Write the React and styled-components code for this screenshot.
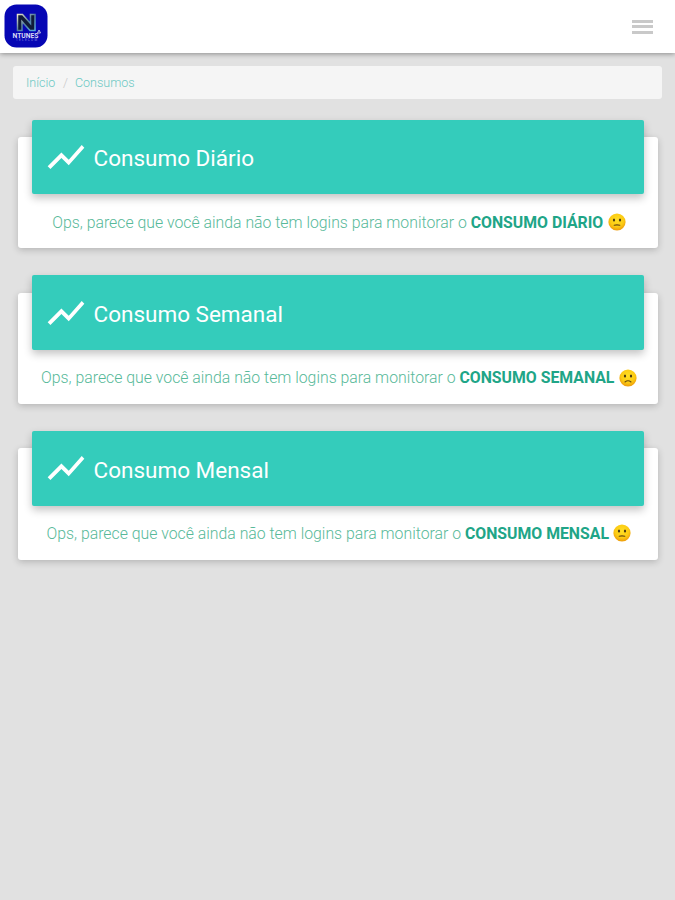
import React from "react";
import styled, { createGlobalStyle } from "styled-components";

const GlobalStyle = createGlobalStyle`
  * { box-sizing: border-box; }
  body {
    margin: 0;
    background: #e1e1e1;
    font-family: Roboto, "Liberation Sans", sans-serif;
  }
`;

const Page = styled.div`
  min-height: 100vh;
  background: #e1e1e1;
`;

const TopBar = styled.header`
  display: flex;
  align-items: center;
  justify-content: space-between;
  height: 53px;
  padding: 0 22px 0 4px;
  background: #fff;
  box-shadow: 0 1px 5px rgba(0, 0, 0, 0.38);
`;

const LogoSvg = styled.svg`
  display: block;
  width: 44px;
  height: 44px;
  margin-top: -1px;
`;

const MenuButton = styled.button`
  display: flex;
  flex-direction: column;
  gap: 2.5px;
  width: 21px;
  padding: 0;
  border: 0;
  background: none;
`;

const MenuBar = styled.span`
  height: 3px;
  background: #c9c9c9;
`;

const Breadcrumb = styled.nav`
  display: flex;
  align-items: center;
  height: 33px;
  margin: 13px 13px 0;
  padding: 0 13px;
  border-radius: 3px;
  background: #f5f5f5;
  font-size: 12.5px;
  font-weight: 300;
`;

const Crumb = styled.a`
  width: ${(p) => p.$width}px;
  color: #6cc8c3;
  white-space: nowrap;
`;

const Separator = styled.span`
  width: 20px;
  padding-left: 8px;
  color: #c8c8c8;
`;

const CardList = styled.main`
  display: flex;
  flex-direction: column;
  gap: 44.4px;
  padding: 38px 17px 0 18px;
`;

const Card = styled.section`
  height: 111.3px;
  padding: 0 14px;
  border-radius: 3px;
  background: #fff;
  box-shadow: 0 2px 7px rgba(0, 0, 0, 0.2);
`;

const CardHeader = styled.div`
  display: flex;
  align-items: center;
  height: 74.5px;
  margin-top: -17.3px;
  padding-left: 12px;
  border-radius: 2px;
  background: #34ccbb;
  box-shadow: 0 4px 9px rgba(0, 0, 0, 0.24);
`;

const TrendIcon = styled.svg`
  display: block;
  width: 44px;
  height: 44px;
  fill: #fff;
`;

const Title = styled.h4`
  margin: 3px 0 0 5.5px;
  color: #fff;
  font-size: 22.5px;
  font-weight: 400;
  line-height: 30px;
`;

const Message = styled.p`
  display: flex;
  align-items: center;
  justify-content: center;
  height: 20px;
  margin: 17.8px -14px 0;
  padding-left: 2px;
  color: #57b999;
  font-size: 15.82px;
  font-weight: 300;
  white-space: pre;
`;

const Strong = styled.b`
  color: #20a587;
  font-weight: 700;
`;

const Face = styled.svg`
  display: block;
  width: 18px;
  height: 18px;
  margin-left: 4.5px;
`;

function Logo() {
  return (
    <LogoSvg viewBox="0 0 44 44">
      <defs>
        <linearGradient id="metal" x1="0" y1="0" x2="1" y2="1">
          <stop offset="0" stopColor="#eee8c9" />
          <stop offset="0.5" stopColor="#547d9f" />
          <stop offset="1" stopColor="#58aee0" />
        </linearGradient>
      </defs>
      <rect x="0.5" y="0.5" width="43" height="43" rx="12" fill="#0606b4" />
      <path d="M13.5 26.5V10.5h5l8 9v-9h4.5v16h-5l-8-9v9z" fill="#111b39" stroke="url(#metal)" strokeWidth="1.5" />
      <path d="m33.5 29 1.5-3 1.5 3h-3" fill="none" stroke="#c8cce8" strokeWidth="0.9" />
      <text x="8.5" y="33.5" textLength="26" lengthAdjust="spacingAndGlyphs" fill="#d9dcf4" fontFamily="Roboto" fontSize="6.5" fontWeight="700">NTUNES</text>
      <text x="12" y="37.2" textLength="21" fill="#8a8ae2" fontFamily="Roboto" fontSize="3">TELECOM</text>
    </LogoSvg>
  );
}

function SadFace({ frown }) {
  return (
    <Face viewBox="0 0 18 18">
      <defs>
        <radialGradient id="face" cx="50%" cy="38%" r="60%">
          <stop offset="0" stopColor="#ffdf25" />
          <stop offset="0.65" stopColor="#fccb13" />
          <stop offset="1" stopColor="#ee9d0b" />
        </radialGradient>
      </defs>
      <circle cx="9" cy="9" r="8.6" fill="url(#face)" />
      <ellipse cx="6" cy="7" rx="1.1" ry="1.5" fill="#493812" />
      <ellipse cx="12" cy="7" rx="1.1" ry="1.5" fill="#493812" />
      <path d={frown ? "M6 13q3-2.6 6 0" : "M6.2 12.3q2.8-.9 5.6 0"} fill="none" stroke="#66480f" strokeWidth="1.1" strokeLinecap="round" />
    </Face>
  );
}

const cards = [
  { title: "Consumo Diário", label: "CONSUMO DIÁRIO", frown: false },
  { title: "Consumo Semanal", label: "CONSUMO SEMANAL", frown: true },
  { title: "Consumo Mensal", label: "CONSUMO MENSAL", frown: false },
];

export default function App() {
  return (
    <>
      <GlobalStyle />
      <Page>
        <TopBar>
          <Logo />
          <MenuButton aria-label="Menu">
            <MenuBar />
            <MenuBar />
            <MenuBar />
          </MenuButton>
        </TopBar>
        <Breadcrumb>
          <Crumb $width={29}>Início</Crumb>
          <Separator>/</Separator>
          <Crumb $width={60}>Consumos</Crumb>
        </Breadcrumb>
        <CardList>
          {cards.map((card) => (
            <Card key={card.title}>
              <CardHeader>
                <TrendIcon viewBox="0 0 24 24">
                  <path d="m3.5 18.49 6-6.01 4 4L22 6.92l-1.41-1.41-7.09 7.97-4-4L2 16.99z" />
                </TrendIcon>
                <Title>{card.title}</Title>
              </CardHeader>
              <Message>
                <span>Ops, parece que você ainda não tem logins para monitorar o </span>
                <Strong>{card.label}</Strong>
                <SadFace frown={card.frown} />
              </Message>
            </Card>
          ))}
        </CardList>
      </Page>
    </>
  );
}
